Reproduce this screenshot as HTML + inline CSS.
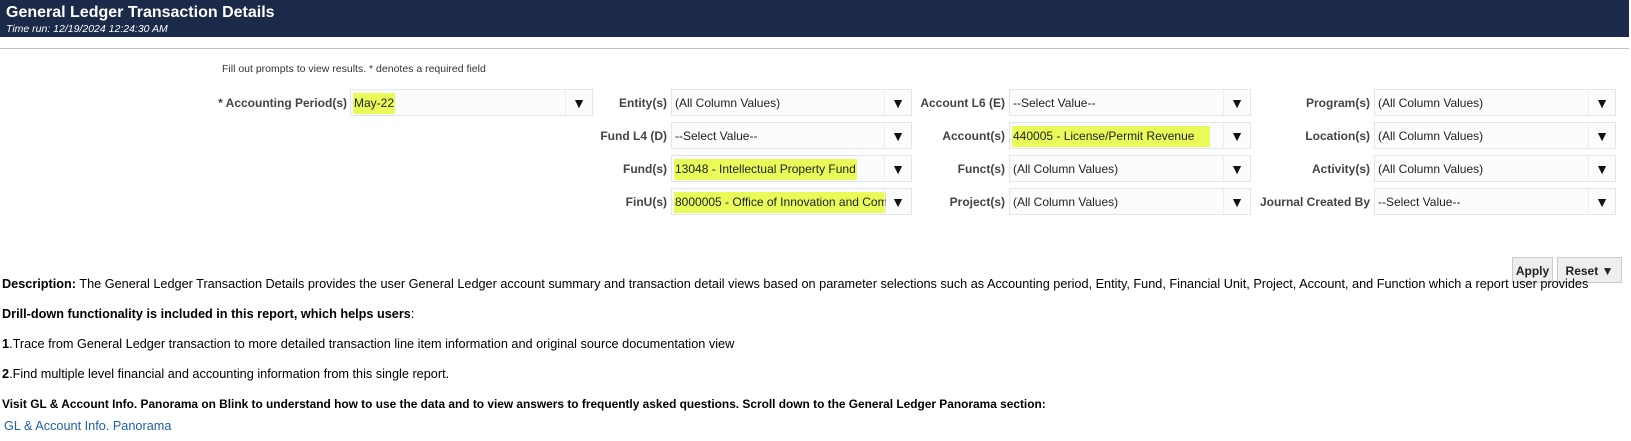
<!DOCTYPE html>
<html><head><style>
body{margin:0;width:1631px;height:441px;background:#fff;font-family:"Liberation Sans",Arial,sans-serif;position:relative;overflow:hidden;color:#000}
.hdr{position:absolute;left:0;top:0;width:1629px;height:37px;background:#1b2a49;color:#fff}
.hdr h1{margin:0;position:absolute;left:6px;top:4px;font-size:16px;font-weight:bold}
.hdr i{position:absolute;left:6px;top:23px;font-size:10.5px}
.line{position:absolute;left:0;top:48px;width:1629px;height:1px;background:#b8c4d2}
.a{position:absolute;white-space:nowrap}
.lbl{position:absolute;font-size:12px;font-weight:bold;color:#444;text-align:right;white-space:nowrap}
.box{position:absolute;height:27px;border:1px solid #e2e6eb;background:#fbfcfe;box-sizing:border-box}
.box .v{position:absolute;left:2px;top:3px;height:21px;line-height:21px;font-size:12px;color:#222;padding:0 1px;white-space:nowrap;overflow:hidden}
.box .v.h{background:#e9fb58}
.box .ar{position:absolute;right:0;top:0;width:26px;height:25px;border-left:1px solid #eceff2;font-size:14px;line-height:27px;text-align:center;color:#111}
.btn{position:absolute;top:257px;height:26px;border:1px solid #c8ccd0;background:#eceef0;font-size:12px;font-weight:bold;line-height:26px;text-align:center;box-sizing:border-box;color:#222}
.t{position:absolute;left:2px;font-size:12.7px;white-space:nowrap}
</style></head><body>
<div class="hdr"><h1>General Ledger Transaction Details</h1><i>Time run: 12/19/2024 12:24:30 AM</i></div>
<div class="line"></div>
<div class="a" style="left:222px;top:63px;font-size:10.5px;color:#333">Fill out prompts to view results. * denotes a required field</div>

<div class="lbl" style="right:1284px;top:96px">* Accounting Period(s)</div>
<div class="box" style="left:350px;top:89px;width:243px"><div class="v h">May-22</div><div class="ar">▼</div></div>

<div class="lbl" style="right:964px;top:96px">Entity(s)</div>
<div class="box" style="left:671px;top:89px;width:241px"><div class="v">(All Column Values)</div><div class="ar">▼</div></div>
<div class="lbl" style="right:964px;top:129px">Fund L4 (D)</div>
<div class="box" style="left:671px;top:122px;width:241px"><div class="v">--Select Value--</div><div class="ar">▼</div></div>
<div class="lbl" style="right:964px;top:162px">Fund(s)</div>
<div class="box" style="left:671px;top:155px;width:241px"><div class="v h">13048 - Intellectual Property Fund</div><div class="ar">▼</div></div>
<div class="lbl" style="right:964px;top:195px">FinU(s)</div>
<div class="box" style="left:671px;top:188px;width:241px"><div class="v h" style="width:210px">8000005 - Office of Innovation and Commerce</div><div class="ar">▼</div></div>

<div class="lbl" style="right:626px;top:96px">Account L6 (E)</div>
<div class="box" style="left:1009px;top:89px;width:242px"><div class="v">--Select Value--</div><div class="ar">▼</div></div>
<div class="lbl" style="right:626px;top:129px">Account(s)</div>
<div class="box" style="left:1009px;top:122px;width:242px"><div class="v h" style="width:196px">440005 - License/Permit Revenue</div><div class="ar">▼</div></div>
<div class="lbl" style="right:626px;top:162px">Funct(s)</div>
<div class="box" style="left:1009px;top:155px;width:242px"><div class="v">(All Column Values)</div><div class="ar">▼</div></div>
<div class="lbl" style="right:626px;top:195px">Project(s)</div>
<div class="box" style="left:1009px;top:188px;width:242px"><div class="v">(All Column Values)</div><div class="ar">▼</div></div>

<div class="lbl" style="right:261px;top:96px">Program(s)</div>
<div class="box" style="left:1374px;top:89px;width:242px"><div class="v">(All Column Values)</div><div class="ar">▼</div></div>
<div class="lbl" style="right:261px;top:129px">Location(s)</div>
<div class="box" style="left:1374px;top:122px;width:242px"><div class="v">(All Column Values)</div><div class="ar">▼</div></div>
<div class="lbl" style="right:261px;top:162px">Activity(s)</div>
<div class="box" style="left:1374px;top:155px;width:242px"><div class="v">(All Column Values)</div><div class="ar">▼</div></div>
<div class="lbl" style="right:261px;top:195px">Journal Created By</div>
<div class="box" style="left:1374px;top:188px;width:242px"><div class="v">--Select Value--</div><div class="ar">▼</div></div>

<div class="btn" style="left:1512px;width:41px">Apply</div>
<div class="btn" style="left:1557px;width:65px">Reset ▼</div>

<div class="t" style="top:277px"><b>Description:</b> The General Ledger Transaction Details provides the user General Ledger account summary and transaction detail views based on parameter selections such as Accounting period, Entity, Fund, Financial Unit, Project, Account, and Function which a report user provides</div>
<div class="t" style="top:307px"><b>Drill-down functionality is included in this report, which helps users</b>:</div>
<div class="t" style="top:337px"><b>1</b>.Trace from General Ledger transaction to more detailed transaction line item information and original source documentation view</div>
<div class="t" style="top:367px"><b>2</b>.Find multiple level financial and accounting information from this single report.</div>
<div class="t" style="top:397px;font-size:11.9px"><b>Visit GL &amp; Account Info. Panorama on Blink to understand how to use the data and to view answers to frequently asked questions. Scroll down to the General Ledger Panorama section:</b></div>
<div class="t" style="top:419px;left:4px;color:#1f5fa8">GL &amp; Account Info. Panorama</div>
</body></html>
